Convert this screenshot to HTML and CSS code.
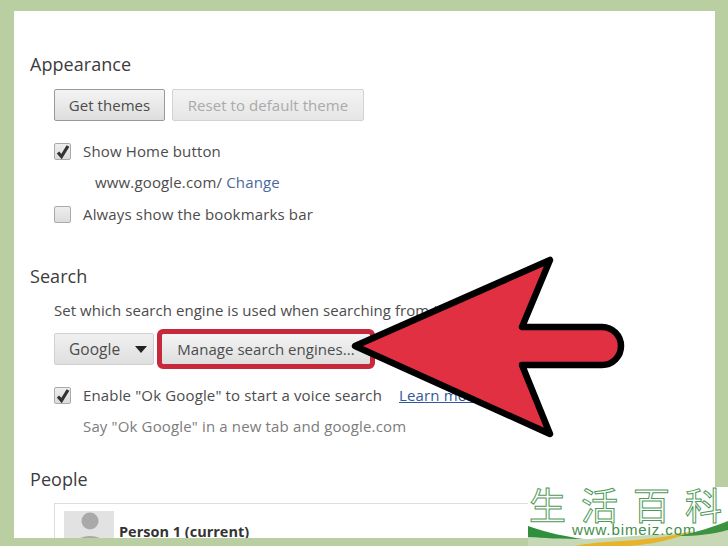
FILE: index.html
```html
<!DOCTYPE html>
<html lang="en">
<head>
  <meta charset="UTF-8" />
  <title>Settings</title>
  <link rel="stylesheet" href="styles.css">
</head>
<body>
  <div class="frame">
    <div class="panel">
      <h2 class="first">Appearance</h2>
      <div class="buttons">
        <button class="btn themes">Get themes</button>
        <button class="btn disabled">Reset to default theme</button>
      </div>
      <div class="check-row home">
        <span class="box">
          <svg viewBox="0 0 18 18" width="18" height="18"><path d="M4 9.5 L7.5 13.5 L14 3" fill="none" stroke="#333" stroke-width="3.2"/></svg>
        </span>
        <span>Show Home button</span>
      </div>
      <div class="url-row">www.google.com/ <a href="#">Change</a></div>
      <div class="check-row bookmarks">
        <span class="box"></span>
        <span>Always show the bookmarks bar</span>
      </div>

      <h2 class="search-head">Search</h2>
      <p class="desc">Set which search engine is used when searching from the omnibox.</p>
      <div class="buttons engine">
        <button class="btn select"><span>Google</span><i class="caret"></i></button>
        <button class="btn manage">Manage search engines...</button>
      </div>
      <div class="check-row voice">
        <span class="box">
          <svg viewBox="0 0 18 18" width="18" height="18"><path d="M4 9.5 L7.5 13.5 L14 3" fill="none" stroke="#333" stroke-width="3.2"/></svg>
        </span>
        <span>Enable "Ok Google" to start a voice search</span>
        <a href="#" class="learn">Learn more</a>
      </div>
      <div class="hint">Say "Ok Google" in a new tab and google.com</div>

      <h2 class="people-head">People</h2>
      <div class="people">
        <div class="avatar">
          <svg viewBox="0 0 50 40" width="50" height="40"><circle cx="26" cy="10" r="8.5" fill="#a9a9a9"/><ellipse cx="26" cy="36" rx="17" ry="11" fill="#a9a9a9"/></svg>
        </div>
        <b>Person 1 (current)</b>
      </div>
    </div>

    <svg class="arrow" viewBox="0 0 290 190" width="290" height="190">
      <path d="M6 90 L201 4 L173 71 L253 71 A19 19 0 0 1 253 109 L173 109 L201 178 Z" fill="#e03042" stroke="#000" stroke-width="6.5" stroke-linejoin="round"/>
    </svg>

    <div class="mark">
      <div class="mark-title"><span>生</span><span>活</span><span>百</span><span>科</span></div>
      <svg class="swoosh" viewBox="0 0 200 25" width="200" height="25">
        <path d="M0 16 L60 18 L200 9 V25 H0 Z" fill="#c6d8b6"/>
        <path d="M0 5 C20 12 40 16 55 18 C35 18 15 17 0 16 Z" fill="#2f8f3c"/>
        <path d="M47 25 C70 19 120 22 165 10 C150 18 120 24 100 25 Z" fill="#e6b32a"/>
        <path d="M150 15 C170 11 185 6 200 0 V9 C185 13 170 15 150 15 Z" fill="#3c9440"/>
      </svg>
      <div class="mark-url">www.bimeiz.com</div>
    </div>
  </div>
</body>
</html>
```

FILE: styles.css
```css
html, body {
  margin: 0;
  padding: 0;
}
body {
  font-family: "Open Sans", Arial, sans-serif;
  color: #4c4c4c;
  background: #b9cfa2;
}
.frame {
  position: relative;
  width: 728px;
  height: 546px;
  box-sizing: border-box;
  padding: 11px 13px 8px 14px;
  overflow: hidden;
}
.panel {
  height: 100%;
  box-sizing: border-box;
  background: #fff;
  padding: 0 16px 0 16px;
  overflow: hidden;
  font-size: 15px;
  letter-spacing: 0.15px;
}
h2 {
  margin: 0;
  font-size: 18px;
  font-weight: 400;
  line-height: 24px;
  color: #3c3c3c;
  letter-spacing: 0.05px;
}
h2.first {
  margin-top: 41px;
}
h2.search-head {
  margin-top: 39px;
}
h2.people-head {
  margin-top: 30px;
}
.buttons {
  display: flex;
  gap: 7px;
  margin: 13px 0 0 24px;
}
.btn {
  height: 32px;
  box-sizing: border-box;
  border: 1px solid #b5b5b5;
  border-radius: 2px;
  background: linear-gradient(#f4f4f4, #dedede);
  font: inherit;
  font-size: 15px;
  letter-spacing: 0.05px;
  color: #4c4c4c;
  padding: 0;
}
.themes {
  width: 111px;
  border-color: #999;
}
.disabled {
  width: 192px;
  color: #aaa;
  background: linear-gradient(#f3f3f3, #e6e6e6);
  border-color: #d2d2d2;
}
.check-row {
  display: flex;
  align-items: center;
  margin: 0 0 0 24px;
  height: 22px;
}
.check-row.home {
  margin-top: 19px;
}
.check-row.bookmarks {
  margin-top: 10px;
}
.check-row.voice {
  margin-top: 19px;
}
.box {
  width: 17px;
  height: 17px;
  box-sizing: border-box;
  border: 1px solid #aaa;
  border-radius: 2px;
  background: linear-gradient(#eee, #dcdcdc);
  margin-right: 12px;
  flex: none;
}
.box svg {
  display: block;
  margin: -1px;
}
.url-row {
  margin: 10px 0 0 65px;
  height: 21px;
  line-height: 21px;
}
a {
  color: #4a6a9c;
  text-decoration: none;
}
.desc {
  margin: 11px 0 0 24px;
  height: 22px;
  line-height: 22px;
  white-space: nowrap;
  letter-spacing: 0.05px;
}
.engine {
  margin-top: 12px;
  gap: 6px;
}
.select {
  display: flex;
  align-items: center;
  width: 100px;
  padding-left: 14px;
  background: linear-gradient(#f0f0f0, #dfdfdf);
  border-color: #d0d0d0;
  font-size: 15.5px;
}
.caret {
  width: 0;
  height: 0;
  border: 6.5px solid transparent;
  border-top: 7px solid #222;
  border-bottom: 0;
  margin-left: 15px;
}
.manage {
  width: 210px;
  border-color: #555;
  outline: 5px solid #c8283c;
  outline-offset: -1px;
  margin-left: 1px;
}
.learn {
  margin-left: 17px;
  color: #33579b;
  text-decoration: underline;
}
.hint {
  margin: 9px 0 0 53px;
  height: 22px;
  line-height: 22px;
  color: #7c7c7c;
}
.people {
  display: flex;
  align-items: flex-start;
  gap: 5px;
  margin: 12px 0 0 24px;
  height: 60px;
  border: 1px solid #ddd;
  padding: 7px 0 0 9px;
}
.people b {
  margin-top: 11px;
  color: #333;
  font-size: 14.5px;
  letter-spacing: 0;
}
.avatar {
  width: 50px;
  height: 50px;
  background: #e2e2e2;
  flex: none;
}
.avatar svg {
  display: block;
}
.arrow {
  position: absolute;
  left: 349px;
  top: 256px;
}
.mark {
  position: absolute;
  left: 528px;
  top: 487px;
  width: 200px;
  height: 59px;
  background: #fff;
}
.mark-title {
  display: flex;
  justify-content: space-between;
  padding: 0 6px 0 1px;
  font-family: "Noto Sans CJK SC", sans-serif;
  font-size: 37px;
  line-height: 34px;
  height: 34px;
  color: #fff;
  -webkit-text-stroke: 1px #4f9a58;
}
.mark-url {
  position: absolute;
  left: 44px;
  top: 35px;
  font-family: "Liberation Sans", Arial, sans-serif;
  font-size: 15px;
  letter-spacing: 0.9px;
  line-height: 15px;
  color: #3f8f4a;
}
.swoosh {
  position: absolute;
  left: 0;
  bottom: 0;
}
```
